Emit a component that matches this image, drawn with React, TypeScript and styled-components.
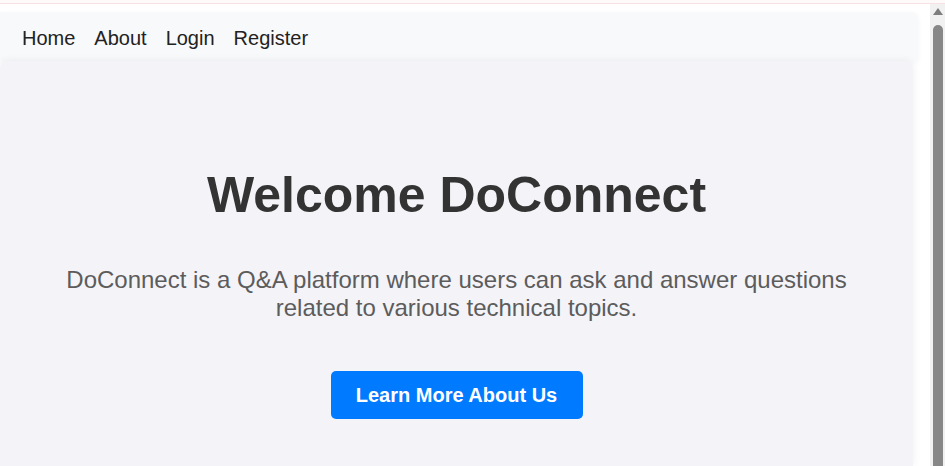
import React from "react";
import styled, { createGlobalStyle } from "styled-components";

const Global = createGlobalStyle`
  html, body { margin: 0; padding: 0; background: #ffffff; }
  body { font-family: "Liberation Sans", Arial, sans-serif; overflow: hidden; }
  * { box-sizing: border-box; }
`;

const Frame = styled.div`
  width: 945px;
  height: 466px;
  display: flex;
  flex-direction: column;
  overflow: hidden;
`;

const TopStrip = styled.div`
  height: 4px;
  flex: none;
  background: #fffafa;
  border-bottom: 1px solid #f9e1e3;
`;

const Body = styled.div`
  flex: 1;
  display: flex;
  min-height: 0;
`;

const Page = styled.div`
  flex: 1;
  display: flex;
  flex-direction: column;
  padding: 8px 12px 0 0;
  background: #ffffff;
  min-width: 0;
`;

const NavBar = styled.nav`
  height: 49px;
  flex: none;
  display: flex;
  align-items: center;
  gap: 19px;
  padding: 2px 22px 0;
  background: #f8f9fa;
  border-top-right-radius: 6px;
  box-shadow: 0 2px 6px rgba(0, 0, 0, 0.04);
`;

const NavLink = styled.a`
  font-size: 20px;
  color: #222;
  text-decoration: none;
  line-height: 1;
`;

const Card = styled.main`
  flex: 1;
  display: flex;
  flex-direction: column;
  align-items: center;
  margin-right: 5px;
  background: #f4f3f8;
  border-radius: 8px 8px 0 0;
  box-shadow: 0 0 8px rgba(0, 0, 0, 0.07);
  padding-top: 105px;
`;

const Title = styled.h1`
  margin: 0;
  font-size: 50px;
  font-weight: 700;
  color: #333333;
  line-height: 58px;
`;

const Lead = styled.p`
  margin: 42px 0 0;
  max-width: 800px;
  text-align: center;
  font-size: 24px;
  line-height: 28px;
  color: #5c5c5c;
`;

const CTA = styled.button`
  margin-top: 49px;
  width: 252px;
  height: 48px;
  border: none;
  border-radius: 5px;
  background: #007bff;
  color: #ffffff;
  font-family: "Liberation Sans", Arial, sans-serif;
  font-size: 20px;
  font-weight: 700;
  cursor: pointer;
`;

const ScrollTrack = styled.div`
  width: 15px;
  flex: none;
  display: flex;
  flex-direction: column;
  align-items: center;
  background: #f1f1f1;
  padding-top: 4px;
`;

const UpArrow = styled.div`
  width: 0;
  height: 0;
  border-left: 5px solid transparent;
  border-right: 5px solid transparent;
  border-bottom: 7px solid #7e7e7e;
  margin-bottom: 10px;
`;

const Thumb = styled.div`
  flex: 1;
  width: 10px;
  background: #878787;
  border-radius: 5px 5px 0 0;
`;

export default function App() {
  return (
    <>
      <Global />
      <Frame>
        <TopStrip />
        <Body>
          <Page>
            <NavBar>
              <NavLink href="#">Home</NavLink>
              <NavLink href="#">About</NavLink>
              <NavLink href="#">Login</NavLink>
              <NavLink href="#">Register</NavLink>
            </NavBar>
            <Card>
              <Title>Welcome DoConnect</Title>
              <Lead>
                DoConnect is a Q&amp;A platform where users can ask and answer questions
                related to various technical topics.
              </Lead>
              <CTA>Learn More About Us</CTA>
            </Card>
          </Page>
          <ScrollTrack>
            <UpArrow />
            <Thumb />
          </ScrollTrack>
        </Body>
      </Frame>
    </>
  );
}
